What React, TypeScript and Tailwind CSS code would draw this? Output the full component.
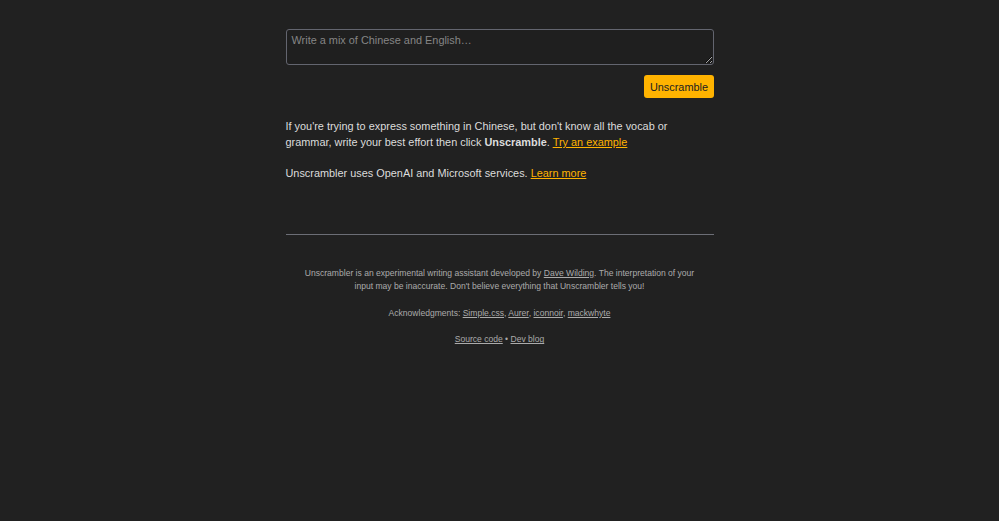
import React from "react";

const App = () => {
  return (
    <div className="min-h-[521px] bg-[#212121] text-[#dcdcdc] font-['Liberation_Sans',Arial,sans-serif]">
      <div className="w-[428px] mx-auto pt-[29px]">
        {/* Input */}
        <textarea
          className="block w-full h-[36px] bg-[#1f1f1f] border border-[#63656f] rounded-[3px] px-[5px] pt-[2px] pb-[4px] text-[10.9px] leading-[16px] text-[#dcdcdc] placeholder:text-[#858585] outline-none"
          placeholder="Write a mix of Chinese and English…"
        />
        <div className="flex justify-end mt-[10px]">
          <button className="h-[23px] px-[5.5px] pt-[1px] rounded-[3px] bg-[#ffb300] text-[#212121] text-[10.9px] leading-none">
            Unscramble
          </button>
        </div>

        {/* Intro */}
        <div className="text-[10.9px] leading-[16.6px]">
          <p className="mt-[19.5px]">
            If you're trying to express something in Chinese, but don't know all the vocab or
            grammar, write your best effort then click <b>Unscramble</b>.{" "}
            <a href="#" className="text-[#ffb300] underline">
              Try an example
            </a>
          </p>
          <p className="mt-[14.3px]">
            Unscrambler uses OpenAI and Microsoft services.{" "}
            <a href="#" className="text-[#ffb300] underline">
              Learn more
            </a>
          </p>
        </div>

        {/* Footer */}
        <footer className="mt-[52px] border-t border-[#6c6e76] px-[9.5px] pt-[32px] text-center text-[#ababab] text-[8.55px] leading-[13.3px]">
          <p>
            Unscrambler is an experimental writing assistant developed by{" "}
            <a href="#" className="underline">Dave Wilding</a>. The interpretation of your input
            may be inaccurate. Don't believe everything that Unscrambler tells you!
          </p>
          <p className="mt-[13.5px]">
            Acknowledgments: <a href="#" className="underline">Simple.css</a>,{" "}
            <a href="#" className="underline">Aurer</a>,{" "}
            <a href="#" className="underline">iconnoir</a>,{" "}
            <a href="#" className="underline">mackwhyte</a>
          </p>
          <p className="mt-[13.5px]">
            <a href="#" className="underline">Source code</a> •{" "}
            <a href="#" className="underline">Dev blog</a>
          </p>
        </footer>
      </div>
    </div>
  );
};

export default App;
